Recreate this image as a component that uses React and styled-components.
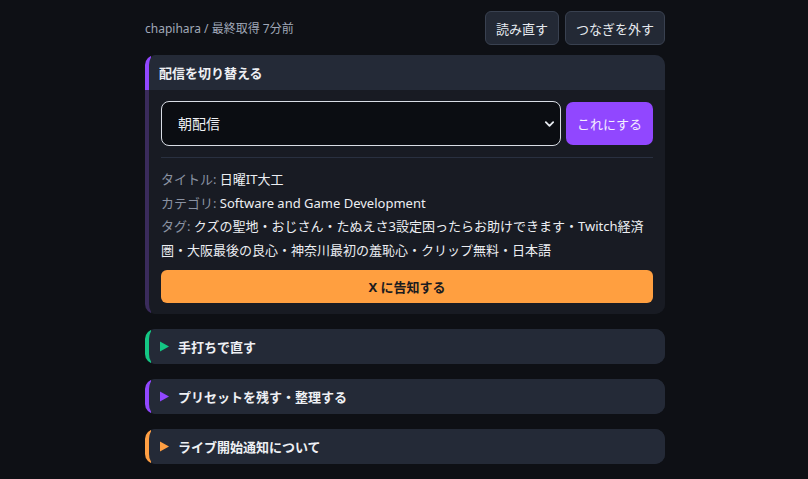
import React from "react";
import styled, { createGlobalStyle } from "styled-components";

const Global = createGlobalStyle`
  html, body { margin: 0; padding: 0; background: #0e1015; }
  body { font-family: "Noto Sans", "Noto Sans CJK JP", sans-serif; color: #e8ebf1; }
  * { box-sizing: border-box; }
`;

const Page = styled.div`
  width: 520px;
  margin: 0 auto;
  padding: 11px 0 16px;
  display: flex;
  flex-direction: column;
  gap: 10px;
  transform: translateX(1px);
`;

const TopBar = styled.div`
  display: flex;
  align-items: center;
  justify-content: space-between;
  height: 34px;
`;

const Meta = styled.span`
  font-size: 12px;
  color: #a0a8b8;
`;

const Actions = styled.div`
  display: flex;
  gap: 6px;
`;

const GhostButton = styled.button`
  height: 34px;
  padding: 0 10px;
  background: #232935;
  border: 1px solid #394150;
  border-radius: 6px;
  color: #e6e9ef;
  font-family: inherit;
  font-size: 13px;
`;

const Stack = styled.div`
  display: flex;
  flex-direction: column;
  gap: 15px;
`;

const Card = styled.div`
  border-left: 4px solid transparent;
  border-radius: 10px;
  overflow: hidden;
  background-image: ${(p) => p.$open
    ? `linear-gradient(to bottom, ${p.$accent} 0 35px, ${p.$dim} 35px)`
    : `linear-gradient(${p.$accent}, ${p.$accent})`};
  background-origin: border-box;
  background-size: 6px 100%;
  background-repeat: no-repeat;
  background-color: ${(p) => (p.$open ? "#181b23" : "#242a37")};
`;

const Summary = styled.div`
  height: 35px;
  display: flex;
  align-items: center;
  gap: 9px;
  padding: 0 10px 0 ${(p) => (p.$open ? 10 : 11)}px;
  background: #242a37;
  font-size: 13px;
  font-weight: 700;
  color: #eef0f4;
`;

const Caret = styled.svg`
  width: 9px;
  height: 11px;
  flex: none;
`;

const Body = styled.div`
  background: #181b23;
  padding: 11px 12px 11px;
  display: flex;
  flex-direction: column;
`;

const PickRow = styled.div`
  display: flex;
  gap: 5px;
  align-items: center;
`;

const SelectWrap = styled.div`
  position: relative;
  flex: 1;
`;

const Select = styled.select`
  width: 100%;
  height: 45px;
  appearance: none;
  background: #0b0d12;
  border: 1px solid #d9dde5;
  border-radius: 8px;
  color: #eef0f4;
  font-family: inherit;
  font-size: 14px;
  padding: 0 30px 0 16px;
  outline: none;
`;

const Chevron = styled.svg`
  position: absolute;
  right: 6px;
  top: 50%;
  width: 11px;
  height: 11px;
  transform: translateY(-50%);
  pointer-events: none;
`;

const PrimaryButton = styled.button`
  width: 87px;
  height: 43px;
  border: none;
  border-radius: 7px;
  background: #9147ff;
  color: #f4efff;
  font-family: inherit;
  font-size: 13px;
`;

const Divider = styled.hr`
  border: none;
  border-top: 1px solid #293040;
  margin: 11px 0 10px;
`;

const Info = styled.p`
  margin: 0;
  font-size: 13px;
  line-height: 23.5px;
  color: #eceef2;
`;

const Label = styled.span`
  color: #8a92a2;
`;

const NotifyButton = styled.button`
  margin-top: 8px;
  height: 33px;
  border: none;
  border-radius: 6px;
  background: #ff9f40;
  color: #1b1b1f;
  font-family: inherit;
  font-size: 13px;
  font-weight: 700;
`;

function Triangle({ color }) {
  return (
    <Caret viewBox="0 0 9 11">
      <path d="M0 0.5 L9 5.5 L0 10.5 Z" fill={color} />
    </Caret>
  );
}

const sections = [
  { title: "手打ちで直す", color: "#14c784" },
  { title: "プリセットを残す・整理する", color: "#9147ff" },
  { title: "ライブ開始通知について", color: "#ff9f43" },
];

export default function App() {
  return (
    <>
      <Global />
      <Page>
        <TopBar>
          <Meta>chapihara / 最終取得 7分前</Meta>
          <Actions>
            <GhostButton>読み直す</GhostButton>
            <GhostButton>つなぎを外す</GhostButton>
          </Actions>
        </TopBar>
        <Stack>
          <Card $open $accent="#9147ff" $dim="#3a2b5c">
            <Summary $open>配信を切り替える</Summary>
            <Body>
              <PickRow>
                <SelectWrap>
                  <Select defaultValue="asa">
                    <option value="asa">朝配信</option>
                  </Select>
                  <Chevron viewBox="0 0 12 12">
                    <path d="M2 4 L6 8 L10 4" fill="none" stroke="#e8ebf1" strokeWidth="2" strokeLinecap="round" strokeLinejoin="round" />
                  </Chevron>
                </SelectWrap>
                <PrimaryButton>これにする</PrimaryButton>
              </PickRow>
              <Divider />
              <Info><Label>タイトル:</Label> 日曜IT大工</Info>
              <Info><Label>カテゴリ:</Label> Software and Game Development</Info>
              <Info>
                <Label>タグ:</Label> クズの聖地・おじさん・たぬえさ3設定困ったらお助けできます・Twitch経済圏・大阪最後の良心・神奈川最初の羞恥心・クリップ無料・日本語
              </Info>
              <NotifyButton>X に告知する</NotifyButton>
            </Body>
          </Card>
          {sections.map((s) => (
            <Card key={s.title} $accent={s.color}>
              <Summary>
                <Triangle color={s.color} />
                {s.title}
              </Summary>
            </Card>
          ))}
        </Stack>
      </Page>
    </>
  );
}
